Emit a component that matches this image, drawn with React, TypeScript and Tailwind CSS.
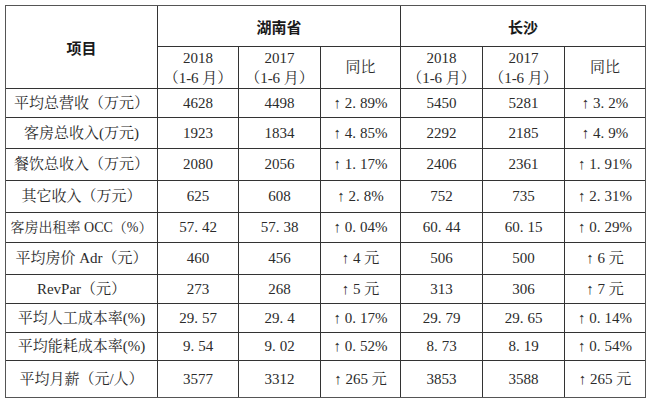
import React from "react";

const FONT = '"Liberation Serif", "Noto Serif CJK SC", "Noto Sans CJK SC", serif';

type Row = { label: string; v: string[]; tight?: boolean };

const rows: Row[] = [
  { label: "平均总营收（万元）", v: ["4628", "4498", "↑ 2.89%", "5450", "5281", "↑ 3.2%"] },
  { label: "客房总收入(万元)", v: ["1923", "1834", "↑ 4.85%", "2292", "2185", "↑ 4.9%"] },
  { label: "餐饮总收入（万元）", v: ["2080", "2056", "↑ 1.17%", "2406", "2361", "↑ 1.91%"] },
  { label: "其它收入（万元）", v: ["625", "608", "↑ 2.8%", "752", "735", "↑ 2.31%"] },
  { label: "客房出租率 OCC（%）", v: ["57.42", "57.38", "↑ 0.04%", "60.44", "60.15", "↑ 0.29%"], tight: true },
  { label: "平均房价 Adr（元）", v: ["460", "456", "↑ 4 元", "506", "500", "↑ 6 元"] },
  { label: "RevPar（元）", v: ["273", "268", "↑ 5 元", "313", "306", "↑ 7 元"] },
  { label: "平均人工成本率(%)", v: ["29.57", "29.4", "↑ 0.17%", "29.79", "29.65", "↑ 0.14%"] },
  { label: "平均能耗成本率(%)", v: ["9.54", "9.02", "↑ 0.52%", "8.73", "8.19", "↑ 0.54%"] },
  { label: "平均月薪（元/人）", v: ["3577", "3312", "↑ 265 元", "3853", "3588", "↑ 265 元"] },
];

const rowHeights = ["h-[28px]", "h-[30px]", "h-[31px]", "h-[31px]", "h-[29px]", "h-[31px]", "h-[28px]", "h-[28px]", "h-[27px]", "h-[36px]"];

function Val({ s }: { s: string }) {
  const parts = s.split(".");
  if (parts.length === 1) return <>{s}</>;
  return (
    <>
      {parts[0]}
      <span className="mr-[4px]">.</span>
      {parts[1]}
    </>
  );
}

const HEAD = '"Noto Sans CJK SC", sans-serif';

export default function App() {
  return (
    <div className="w-[650px] h-[405px] bg-white overflow-hidden" style={{ fontFamily: FONT }}>
      <div
        className="ml-[5px] mt-[5px] w-[641px] border border-[#555] bg-[#333] grid gap-px text-[15px] text-[#2b2b2b] leading-none"
        style={{ gridTemplateColumns: "151px 80px 81px 79px 81px 81px 80px" }}
      >
        <div className="row-span-2 bg-white flex items-center justify-center font-bold text-[#1a1a1a]" style={{ fontFamily: HEAD }}>
          项目
        </div>
        <div className="col-span-3 h-[40px] bg-white flex items-center justify-center font-bold text-[#1a1a1a]" style={{ fontFamily: HEAD }}>
          湖南省
        </div>
        <div className="col-span-3 h-[40px] bg-white flex items-center justify-center font-bold text-[#1a1a1a]" style={{ fontFamily: HEAD }}>
          长沙
        </div>
        {[0, 1].map((g) => (
          <React.Fragment key={g}>
            <div className="h-[41px] bg-white flex flex-col items-center justify-center gap-[5px] pt-[2px]">
              <div>2018</div>
              <div className="whitespace-nowrap">（1-6 月）</div>
            </div>
            <div className="h-[41px] bg-white flex flex-col items-center justify-center gap-[5px] pt-[2px]">
              <div>2017</div>
              <div className="whitespace-nowrap">（1-6 月）</div>
            </div>
            <div className="h-[41px] bg-white flex items-center justify-center">同比</div>
          </React.Fragment>
        ))}
        {rows.map((r, i) => (
          <React.Fragment key={i}>
            <div
              className={`${rowHeights[i]} bg-white flex items-center justify-center whitespace-nowrap ${r.tight ? "text-[14px]" : ""}`}
            >
              {r.label}
            </div>
            {r.v.map((v, j) => (
              <div key={j} className={`${rowHeights[i]} bg-white flex items-center justify-center whitespace-nowrap`}>
                <Val s={v} />
              </div>
            ))}
          </React.Fragment>
        ))}
      </div>
    </div>
  );
}
